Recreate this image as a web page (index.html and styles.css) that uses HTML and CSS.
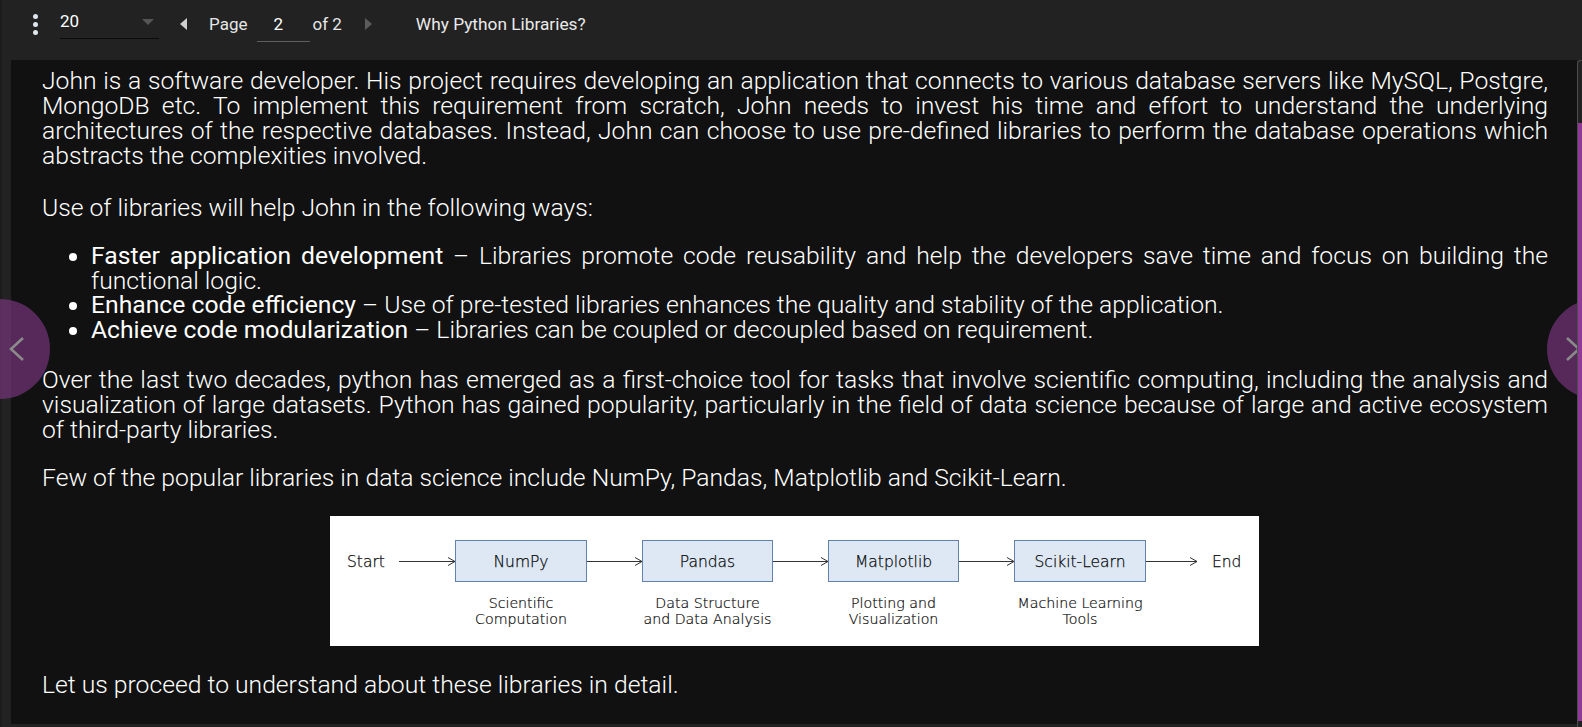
FILE: index.html
```html
<!DOCTYPE html>
<html lang="en">
<head>
<meta charset="utf-8">
<title>Why Python Libraries?</title>
<link rel="stylesheet" href="styles.css">
</head>
<body>
<div class="app">
  <header class="toolbar">
    <div class="kebab"><span></span><span></span><span></span></div>
    <div class="select">
      <span class="select-value">20</span>
      <svg class="select-caret" width="12" height="7" viewBox="0 0 12 7"><path d="M0 0 L12 0 L6 6 Z" fill="#555"/></svg>
    </div>
    <svg class="caret caret-prev" width="7" height="12" viewBox="0 0 7 12"><path d="M7 0 L7 12 L0 6 Z" fill="#d0d0d0"/></svg>
    <span class="label page-label">Page</span>
    <span class="page-input">2</span>
    <span class="label of-label">of 2</span>
    <svg class="caret caret-next" width="7" height="12" viewBox="0 0 7 12"><path d="M0 0 L0 12 L7 6 Z" fill="#5c5c5c"/></svg>
    <span class="title">Why Python Libraries?</span>
  </header>

  <div class="main">
    <section class="viewer">
      <div class="content">
        <p class="para justify first">John is a software developer. His project requires developing an application that connects to various database servers like MySQL, Postgre, MongoDB etc. To implement this requirement from scratch, John needs to invest his time and effort to understand the underlying architectures of the respective databases. Instead, John can choose to use pre-defined libraries to perform the database operations which abstracts the complexities involved.</p>
        <p class="para gap-a">Use of libraries will help John in the following ways:</p>
        <ul class="benefits gap-b">
          <li><strong>Faster application development</strong> – Libraries promote code reusability and help the developers save time and focus on building the functional logic.</li>
          <li><strong>Enhance code efficiency</strong> – Use of pre-tested libraries enhances the quality and stability of the application.</li>
          <li><strong>Achieve code modularization</strong> – Libraries can be coupled or decoupled based on requirement.</li>
        </ul>
        <p class="para justify gap-c">Over the last two decades, python has emerged as a first-choice tool for tasks that involve scientific computing, including the analysis and visualization of large datasets. Python has gained popularity, particularly in the field of data science because of large and active ecosystem of third-party libraries.</p>
        <p class="para gap-d">Few of the popular libraries in data science include NumPy, Pandas, Matplotlib and Scikit-Learn.</p>
        <figure class="diagram gap-e">
          <svg width="929" height="130" viewBox="0 0 929 130">
            <rect x="0" y="0" width="929" height="130" fill="#ffffff"/>
            <g class="dg-label">
              <text x="17" y="50.5">Start</text>
              <text x="882" y="50.5">End</text>
            </g>
            <g stroke="#333" stroke-width="1" fill="none">
              <path d="M69 45.5 H125"/><path d="M118 41.5 L125 45.5 L118 49.5"/>
              <path d="M257 45.5 H312"/><path d="M305 41.5 L312 45.5 L305 49.5"/>
              <path d="M443 45.5 H498"/><path d="M491 41.5 L498 45.5 L491 49.5"/>
              <path d="M629 45.5 H684"/><path d="M677 41.5 L684 45.5 L677 49.5"/>
              <path d="M816 45.5 H867"/><path d="M860 41.5 L867 45.5 L860 49.5"/>
            </g>
            <g fill="#dde8f4" stroke="#6282aa" stroke-width="1">
              <rect x="125.5" y="24.5" width="131" height="41"/>
              <rect x="312.5" y="24.5" width="130" height="41"/>
              <rect x="498.5" y="24.5" width="130" height="41"/>
              <rect x="684.5" y="24.5" width="131" height="41"/>
            </g>
            <g class="dg-label" text-anchor="middle">
              <text x="191" y="50.5">NumPy</text>
              <text x="377.5" y="50.5">Pandas</text>
              <text x="563.5" y="50.5">Matplotlib</text>
              <text x="750" y="50.5">Scikit-Learn</text>
            </g>
            <g class="dg-caption" text-anchor="middle">
              <text x="191" y="91.5">Scientific</text>
              <text x="191" y="108">Computation</text>
              <text x="377.5" y="91.5">Data Structure</text>
              <text x="377.5" y="108">and Data Analysis</text>
              <text x="563.5" y="91.5">Plotting and</text>
              <text x="563.5" y="108">Visualization</text>
              <text x="750" y="91.5">Machine Learning</text>
              <text x="750" y="108">Tools</text>
            </g>
          </svg>
        </figure>
        <p class="para gap-f">Let us proceed to understand about these libraries in detail.</p>
      </div>
    </section>
    <div class="scrollbar"><div class="thumb"></div></div>
  </div>

  <button class="nav nav-prev" aria-label="Previous">
    <svg width="16" height="26" viewBox="0 0 16 26"><path d="M14 2 L2 13 L14 24" fill="none" stroke="#8a8a8a" stroke-width="2.6"/></svg>
  </button>
  <button class="nav nav-next" aria-label="Next">
    <svg width="16" height="26" viewBox="0 0 16 26"><path d="M2 2 L14 13 L2 24" fill="none" stroke="#8a8a8a" stroke-width="2.6"/></svg>
  </button>
</div>
</body>
</html>
```

FILE: styles.css
```css
html, body {
  margin: 0;
  padding: 0;
}

body {
  background: #222222;
  font-family: Roboto, "Noto Sans", "Liberation Sans", sans-serif;
  color: #ffffff;
  width: 1582px;
  height: 727px;
  overflow: hidden;
}

.app {
  position: relative;
  width: 1582px;
  height: 727px;
  display: flex;
  flex-direction: column;
  border-left: 2px solid #1c1c1c;
  box-sizing: border-box;
}

/* ---------- toolbar ---------- */
.toolbar {
  height: 60px;
  flex: 0 0 60px;
  display: flex;
  align-items: center;
  padding-bottom: 12px;
  box-sizing: border-box;
  font-size: 17px;
  color: #e6e6e6;
}

.kebab {
  margin-left: 31px;
  display: flex;
  flex-direction: column;
  gap: 3px;
}

.kebab span {
  width: 5px;
  height: 5px;
  border-radius: 50%;
  background: #dfe6ee;
}

.select {
  margin-left: 22px;
  width: 99px;
  height: 30px;
  border-bottom: 1px solid #0b0b0b;
  display: flex;
  align-items: center;
  justify-content: space-between;
  padding-bottom: 6px;
  box-sizing: border-box;
}

.select-value {
  color: #ffffff;
  font-size: 17px;
}

.select-caret {
  margin-right: 5px;
  margin-top: 4px;
}

.caret-prev {
  margin-left: 21px;
}

.page-label {
  margin-left: 22px;
}

.page-input {
  margin-left: 10px;
  width: 53px;
  height: 32px;
  line-height: 28px;
  padding-left: 16px;
  border-bottom: 1px solid #5e5e5e;
  box-sizing: border-box;
  margin-top: 4px;
  padding-bottom: 6px;
  color: #ffffff;
}

.of-label {
  margin-left: 2px;
}

.caret-next {
  margin-left: 23px;
}

.title {
  margin-left: 44px;
  font-size: 17.3px;
  color: #eaeaea;
}

/* ---------- main viewer ---------- */
.main {
  flex: 1;
  display: flex;
  padding-left: 9px;
}

.viewer {
  flex: 1;
  background: #111111;
  margin-bottom: 3px;
  overflow: hidden;
}

.content {
  padding: 8px 29px 0 31px;
  font-size: 24.7px;
  font-weight: 300;
  line-height: 25px;
  color: #ffffff;
}

.para {
  margin: 0;
}

.justify {
  text-align: justify;
}

.gap-a { margin-top: 27px; }
.gap-b { margin-top: 24px; }
.gap-c { margin-top: 25px; }
.gap-d { margin-top: 23px; }
.gap-e { margin-top: 26px; }
.gap-f { margin-top: 26px; }

.benefits {
  margin-bottom: 0;
  padding-left: 49px;
  text-align: justify;
  line-height: 24.5px;
}

.benefits strong {
  font-weight: 400;
}

.diagram {
  margin-left: 288px;
  margin-right: 0;
  margin-bottom: 0;
  height: 130px;
  line-height: 0;
}

.dg-label text {
  font-family: "DejaVu Sans", Verdana, sans-serif;
  font-size: 15.5px;
  fill: #0a0a0a;
  stroke: #0a0a0a;
  stroke-width: 0.25px;
}

.dg-caption text {
  font-family: "DejaVu Sans", Verdana, sans-serif;
  font-size: 14.2px;
  fill: #0a0a0a;
  stroke: #0a0a0a;
  stroke-width: 0.2px;
}

/* ---------- scrollbar ---------- */
.scrollbar {
  width: 4px;
  border-left: 1px solid #4d4d4d;
  border-top: 1px solid #4d4d4d;
  border-top-left-radius: 4px;
  padding-top: 62px;
  padding-bottom: 6px;
  position: relative;
  z-index: 3;
}

.thumb {
  height: 100%;
  background: #8e3a96;
}

/* ---------- side navigation ---------- */
.nav {
  position: absolute;
  top: 299px;
  width: 100px;
  height: 100px;
  border: 0;
  padding: 0;
  border-radius: 50%;
  background: rgba(125, 55, 131, 0.65);
  display: flex;
  align-items: center;
  z-index: 2;
}

.nav-prev {
  left: -52px;
  justify-content: flex-end;
  padding-right: 25px;
  box-sizing: border-box;
}

.nav-next {
  left: 1545px;
  justify-content: flex-start;
  padding-left: 18px;
  box-sizing: border-box;
}
```
